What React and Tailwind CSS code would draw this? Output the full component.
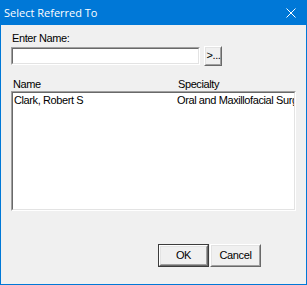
import React from "react";

function Sunken({ className = "", innerClassName = "", children }) {
  return (
    <div className={`border border-t-[#a0a0a0] border-l-[#a0a0a0] border-r-white border-b-white ${className}`}>
      <div className={`h-full w-full border border-t-[#696969] border-l-[#696969] border-r-[#e3e3e3] border-b-[#e3e3e3] bg-white ${innerClassName}`}>
        {children}
      </div>
    </div>
  );
}

function Raised({ className = "", children }) {
  return (
    <div className={`border border-t-white border-l-white border-r-[#696969] border-b-[#696969] bg-[#f0f0f0] ${className}`}>
      <div className="h-full w-full border border-t-[#e3e3e3] border-l-[#e3e3e3] border-r-[#a0a0a0] border-b-[#a0a0a0] flex items-center justify-center">
        {children}
      </div>
    </div>
  );
}

export default function App() {
  return (
    <div className="w-[307px] h-[285px] flex flex-col font-['Liberation_Sans',Arial,sans-serif] text-[11px] leading-[13px] tracking-[-0.4px] text-black select-none">
      <div className="h-[25px] shrink-0 bg-[#0078d7] flex justify-between">
        <div className="pl-[4px] pt-[5px] font-['Open_Sans',sans-serif] text-[11px] leading-[15px] tracking-normal text-white">
          Select Referred To
        </div>
        <div className="pt-[8px] pr-[11px]">
          <svg width="10" height="10" viewBox="0 0 10 10" className="block">
            <path d="M0.5 0.5 L9.5 9.5 M9.5 0.5 L0.5 9.5" stroke="white" strokeWidth="1" fill="none" />
          </svg>
        </div>
      </div>
      <div className="flex-1 bg-[#f0f0f0] border-l border-r border-b border-[#0078d7] pl-[10px] pt-[7px] flex flex-col">
        <div className="ml-[1px] h-[13px]">Enter Name:</div>
        <div className="mt-[1px] h-[20px] flex items-center">
          <Sunken className="w-[189px] h-[18px]" />
          <Raised className="ml-[4px] w-[18px] h-[20px]">
            <span className="pb-[1px] pl-[1px]">&gt;...</span>
          </Raised>
        </div>
        <div className="mt-[12px] h-[13px] flex ml-[2px]">
          <div className="w-[165px]">Name</div>
          <div>Specialty</div>
        </div>
        <Sunken className="w-[285px] h-[120px]" innerClassName="overflow-hidden">
          <div className="pt-[1px] pl-[1px] flex whitespace-nowrap">
            <div className="w-[163px] shrink-0">Clark, Robert S</div>
            <div>Oral and Maxillofacial Surgery</div>
          </div>
        </Sunken>
        <div className="mt-[33px] flex pl-[147px] gap-[1px]">
          <div className="w-[51px] h-[23px] border border-[#3c3c3c]">
            <Raised className="w-full h-full">
              <span>OK</span>
            </Raised>
          </div>
          <Raised className="w-[51px] h-[23px]">
            <span>Cancel</span>
          </Raised>
        </div>
      </div>
    </div>
  );
}
